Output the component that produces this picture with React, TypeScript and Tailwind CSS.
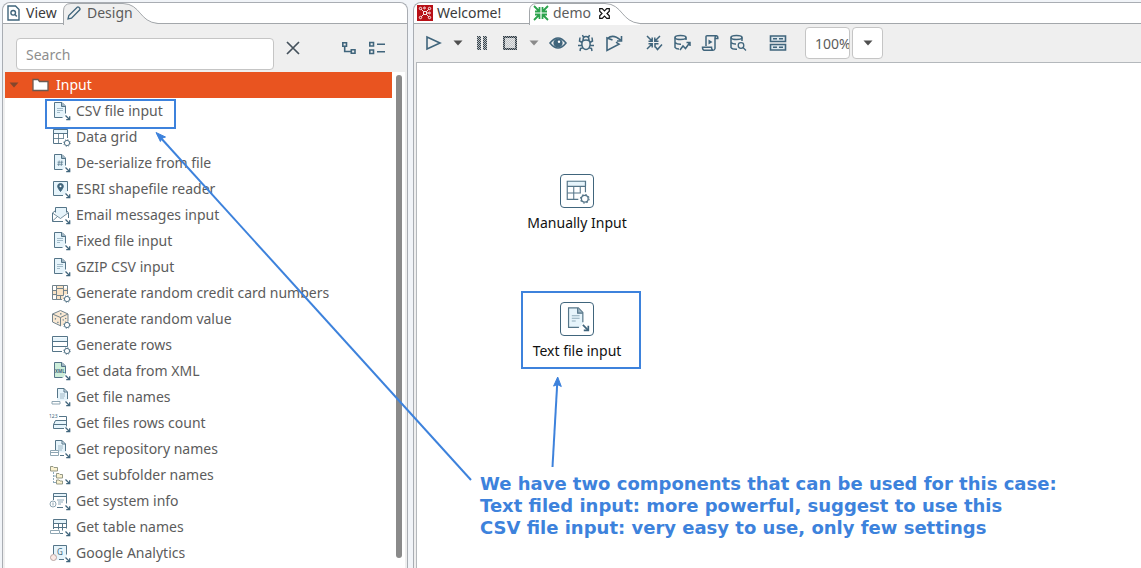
import type { ReactNode } from "react";

const INK = "#40657c";
const SOFT = "#557588";
const TINT = "#e6f4fb";

type IconProps = { size?: number; stroke?: number; children: ReactNode };

function Glyph({ size = 20, stroke = 1, children }: IconProps) {
  return (
    <svg
      width={size}
      height={size}
      viewBox="0 0 20 20"
      fill="none"
      stroke={SOFT}
      strokeWidth={stroke}
      className="shrink-0 overflow-visible"
      aria-hidden="true"
    >
      {children}
    </svg>
  );
}

function ArrowOut() {
  return (
    <g strokeWidth="1.3" stroke={INK}>
      <path d="M14.500 14.500l4 4" />
      <path d="M18.700 15.200v3.500h-3.500" />
    </g>
  );
}

function Gear() {
  return (
    <g>
      <circle cx="16" cy="16" r="2.600" fill="#fff" strokeWidth="1" />
      <circle cx="16" cy="16" r="3.300" strokeWidth="0.9" strokeDasharray="1.2 1.392" />
    </g>
  );
}

function Doc({ lines = true, fill = TINT }: { lines?: boolean; fill?: string }) {
  return (
    <g>
      <path d="M3.500 1.500h7l4 4V13l-2 3.500h-9z" fill={fill} stroke="none" />
      <path d="M11.500 16.500h-8v-15h7.500l3.500 3.500v7.500" />
      <path d="M10.500 1.500v4h4" fill="#9fb6c3" />
      {lines && <path d="M6 7.500h6M6 9.500h6M6 11.500h3" stroke="#8fabbb" strokeWidth="0.8" />}
    </g>
  );
}

function SmallDoc() {
  return (
    <g>
      <path d="M6 1.500h7l4 4v8H6z" fill={TINT} stroke="none" />
      <path d="M6.500 11V1.500H13l3.500 3.500v7M13 1.500v3.500h3.500" />
      <path d="M9 7h5M9 9h5M9 11h4" stroke="#8fabbb" strokeWidth="0.8" />
    </g>
  );
}

const csvIcon = (
  <Glyph>
    <Doc />
    <ArrowOut />
  </Glyph>
);

const gridShape = (
  <g>
    <path d="M2.500 2h15v4h-15z" fill={TINT} stroke="none" />
    <path d="M11 16.500H2.500v-14h14V11M2.500 6.500h14" />
    <path d="M2.500 11.500H13M7.500 6.500v10M12.500 6.500v5" strokeWidth="0.8" />
    <Gear />
  </g>
);

const items: { label: string; icon: ReactNode; marked?: boolean }[] = [
  { label: "CSV file input", icon: csvIcon, marked: true },
  { label: "Data grid", icon: <Glyph>{gridShape}</Glyph> },
  {
    label: "De-serialize from file",
    icon: (
      <Glyph>
        <Doc lines={false} />
        <path d="M8.200 7.500l-.6 5.500M10.800 7.500l-.6 5.500M6.500 9.200h5.700M6.200 11.300h5.700" strokeWidth="0.7" />
        <ArrowOut />
      </Glyph>
    ),
  },
  {
    label: "ESRI shapefile reader",
    icon: (
      <Glyph>
        <path d="M2.500 2.500h14v10l-4 4h-10z" fill={TINT} stroke="none" />
        <path d="M12 16.500H2.500v-14h14V12" />
        <path
          d="M9.500 12.500C8 10.200 6.700 9 6.700 7.300a2.800 2.800 0 015.600 0c0 1.700-1.300 2.900-2.800 5.200z"
          fill={INK}
          stroke={INK}
        />
        <circle cx="9.500" cy="7.300" r="1" fill="#fff" stroke="none" />
        <ArrowOut />
      </Glyph>
    ),
  },
  {
    label: "Email messages input",
    icon: (
      <Glyph>
        <path d="M4.500 2.500h11v6l-6 5-5-4.500z" fill={TINT} stroke="none" />
        <path d="M4.500 7.500v-5h11v5M4.500 5.500l-3 2.500v8.500H12M15.500 5.500l2 2.500v5" />
        <path d="M1.500 8l8 5.500 7.500-5.500M1.500 16l5-4.500" strokeWidth="0.8" />
        <ArrowOut />
      </Glyph>
    ),
  },
  { label: "Fixed file input", icon: csvIcon },
  { label: "GZIP CSV input", icon: csvIcon },
  {
    label: "Generate random credit card numbers",
    icon: (
      <Glyph>
        <path d="M5.500 2.500h7v3h4v6h-4v5h-7v-4h-4v-5h4z" fill="#f9e2c4" stroke="none" />
        <path
          d="M11 16.500H1.500v-14h15V11M5.500 5.500h7v7h-7zM5.500 5.500v-3M12.500 5.500v-3M1.500 7.500h4M12.500 7.500h4M1.500 11.500h4M5.500 12.500v4M9.500 12.500v4"
          stroke="#73838b"
        />
        <Gear />
      </Glyph>
    ),
  },
  {
    label: "Generate random value",
    icon: (
      <Glyph>
        <path d="M2 5l7.500-3L17 5v7l-6 5-9-4z" fill="#f9e8d2" stroke="none" />
        <path d="M10 17l-8.500-4V5l8-3.500L17 5v7M1.500 5l8 3.500L17 5M9.500 8.500V17" stroke="#73838b" />
        <path d="M9 4.800h1.500M4 9.500l.8.800M6.500 13l.8.800M12.500 10.500l-.6.900M15 9l-.6.900" strokeWidth="1.300" />
        <Gear />
      </Glyph>
    ),
  },
  {
    label: "Generate rows",
    icon: (
      <Glyph>
        <path d="M1.500 2.500h15v4h-15z" fill={TINT} stroke="none" />
        <path d="M11 16.500H1.500v-15h15v10h-15M1.500 6.500h15" />
        <Gear />
      </Glyph>
    ),
  },
  {
    label: "Get data from XML",
    icon: (
      <Glyph>
        <Doc lines={false} fill="#cdeeda" />
        <text x="9" y="11.500" fontSize="4.500" fontWeight="700" textAnchor="middle" fill={INK} stroke="none" fontFamily="Noto Sans, sans-serif">
          XML
        </text>
        <ArrowOut />
      </Glyph>
    ),
  },
  {
    label: "Get file names",
    icon: (
      <Glyph>
        <SmallDoc />
        <path d="M1 14.500h8v2.500H1z" fill="#fff" stroke="#8fa6b3" />
        <ArrowOut />
      </Glyph>
    ),
  },
  {
    label: "Get files rows count",
    icon: (
      <Glyph>
        <text x="-2" y="5" fontSize="5" fill={INK} stroke="none" fontFamily="Noto Sans, sans-serif">
          123
        </text>
        <path d="M3 8h12v7H3z" fill={TINT} stroke="none" />
        <path d="M8 3.500h7.500v10M4.500 7.500h11M2.500 11.500h13M4.500 7.500l-2 4v4H13" />
        <ArrowOut />
      </Glyph>
    ),
  },
  {
    label: "Get repository names",
    icon: (
      <Glyph>
        <g transform="translate(-2 0)">
          <SmallDoc />
        </g>
        <path d="M-.5 11.500h8v5h-8zM-.5 13.500h8" fill="#fff" stroke="#8fa6b3" />
        <path d="M9 16.500h4" />
        <ArrowOut />
      </Glyph>
    ),
  },
  {
    label: "Get subfolder names",
    icon: (
      <Glyph>
        <path
          d="M-.5 1.500H2l1 1h3.500V6h-7zM5.500 8.500H8l1 1h2.500V13h-6zM5.500 15H8l1 1h2.500v3h-6z"
          fill="#fbf2d0"
          stroke="#8a8e7c"
          strokeWidth="0.9"
        />
        <path d="M2.500 7v11M3 11h2.500M3 17.500h2.500" stroke="#8fabbb" strokeDasharray="2 1" />
        <ArrowOut />
      </Glyph>
    ),
  },
  {
    label: "Get system info",
    icon: (
      <Glyph>
        <path d="M2 2.500h14v3H2z" fill={TINT} stroke="none" />
        <path d="M2.500 9V2.500h13v10M2.500 5.500h13M6 16.500h6" />
        <path d="M6 9h7M7 11h5M7 13h3" stroke="#8fabbb" />
        <circle cx="2" cy="13" r="3" fill="#fff" stroke="#8fa6b3" />
        <path d="M2 11.500v3" stroke="#8fa6b3" />
        <ArrowOut />
      </Glyph>
    ),
  },
  {
    label: "Get table names",
    icon: (
      <Glyph>
        <path d="M2 2h14v4H2z" fill={TINT} stroke="none" />
        <path d="M2.500 12V2.500h13v9M2.500 6.500h13M2.500 10.500h13M7.500 6.500v6M11.500 6.500v7M9 16.500h3" />
        <path d="M-.5 13.500h9v3h-9z" fill="#fff" stroke="#8fa6b3" />
        <ArrowOut />
      </Glyph>
    ),
  },
  {
    label: "Google Analytics",
    icon: (
      <Glyph>
        <path d="M2 2h14v11l-4 4H2z" fill={TINT} stroke="none" />
        <path d="M2.500 11V2.500h13v9M8 16.500h5" />
        <text x="9" y="12" fontSize="8" textAnchor="middle" fill={INK} stroke="none" fontFamily="Noto Sans, sans-serif">
          G
        </text>
        <circle cx="2.500" cy="14.500" r="3" fill="#fbe9e4" stroke="#b8a5a3" />
        <ArrowOut />
      </Glyph>
    ),
  },
];

function ToolButton({ label, children, wide = true }: { label: string; children: ReactNode; wide?: boolean }) {
  return (
    <button type="button" aria-label={label} className={`flex h-7 items-center justify-center ${wide ? "w-7" : "w-5"}`}>
      {children}
    </button>
  );
}

function ToolIcon({ children }: { children: ReactNode }) {
  return (
    <svg width="18" height="18" viewBox="0 0 18 18" fill="none" stroke={INK} strokeWidth="1.6" aria-hidden="true">
      {children}
    </svg>
  );
}

function Checker({ id, dark, light }: { id: string; dark: string; light: string }) {
  return (
    <defs>
      <pattern id={id} width="2" height="2" patternUnits="userSpaceOnUse">
        <path d="M0 0h2v2H0z" fill={light} stroke="none" />
        <path d="M0 0h1v1H0zM1 1h1v1H1z" fill={dark} stroke="none" />
      </pattern>
    </defs>
  );
}

function Caret({ color }: { color: string }) {
  return (
    <svg width="10" height="6" viewBox="0 0 10 6" aria-hidden="true">
      <path d="M.5.500h9L5 5.500z" fill={color} />
    </svg>
  );
}

function TabShape({ fill, width, path }: { fill: string; width: number; path: string }) {
  return (
    <svg width={width} height="22" viewBox={`0 0 ${width} 22`} className="absolute top-0 left-0" aria-hidden="true">
      <path d={`${path}V22H0z`} fill={fill} />
      <path d={path} fill="none" stroke="#a3a7ab" />
    </svg>
  );
}

function DesignPanel() {
  return (
    <aside className="flex w-[406px] shrink-0 flex-col rounded-t-lg border-x border-t border-[#a9adb3] bg-[#efefef]">
      <div role="tablist" className="flex h-[21px] shrink-0 rounded-t-lg border-b border-[#a3a7ab] bg-white">
        <button type="button" role="tab" aria-selected="false" className="flex w-[60px] items-center gap-1.5 pl-1 text-[#3b3b3b]">
          <svg width="13" height="16" viewBox="0 0 13 16" fill="none" stroke={INK} strokeWidth="1.400" aria-hidden="true">
            <path d="M1 1h7.500L12 4.500V15H1z" />
            <circle cx="6.200" cy="7.800" r="2.300" />
            <path d="M8 9.500l1.800 2" />
          </svg>
          View
        </button>
        <button type="button" role="tab" aria-selected="true" className="relative flex w-24 items-center text-[#5c5c5c]">
          <TabShape fill="#efefef" width={96} path="M.5 22V8Q.5.500 8 .500H60C78 1 76 19 95 20.500" />
          <span className="relative flex items-center gap-1.5 pl-1">
            <svg width="14" height="14" viewBox="0 0 14 14" fill="none" stroke={INK} strokeWidth="1.300" aria-hidden="true">
              <path d="M1 13l.8-3.500L10.200 1.200q.8-.6 1.600.1l.9.900q.7.800.1 1.600L4.500 12.200z" />
            </svg>
            Design
          </span>
        </button>
      </div>

      <div className="flex shrink-0 items-start pt-3.5 pr-4 pb-0.5 pl-[13px]">
        <input
          type="text"
          aria-label="Search"
          placeholder="Search"
          className="h-8 min-w-0 flex-1 rounded border border-[#c5c5c5] bg-white px-[9px] outline-none placeholder:text-[#8e8e8e]"
        />
        <button type="button" aria-label="Clear search" className="ml-[5px] flex h-5 w-7 items-center justify-center">
          <svg width="14" height="14" viewBox="0 0 14 14" stroke="#45525c" strokeWidth="1.700" aria-hidden="true">
            <path d="M1 1l12 12M13 1L1 13" />
          </svg>
        </button>
        <button type="button" aria-label="Expand all" className="ml-7 flex h-5 w-7 items-center justify-center">
          <svg width="14" height="14" viewBox="0 0 14 14" fill="none" stroke={INK} strokeWidth="1.600" aria-hidden="true">
            <path d="M.8 1.800h3.700v3.400H.800zM9.300 8.800H13v3.400H9.300zM2.700 5v5.500h6.500" />
          </svg>
        </button>
        <button type="button" aria-label="Collapse all" className="flex h-5 w-7 items-center justify-center">
          <svg width="18" height="14" viewBox="0 0 18 14" fill="none" stroke={INK} strokeWidth="1.600" aria-hidden="true">
            <path d="M1.800 1.500h3.700V5H1.800zM1.800 9h3.700v3.500H1.800zM9 3.300h8M9 10.700h8" />
          </svg>
        </button>
      </div>

      <div className="mx-0.5 flex min-h-0 flex-1 bg-white">
        <div className="min-w-0 flex-1 overflow-hidden">
          <button type="button" aria-expanded="true" className="flex h-[26px] w-full items-center bg-[#e95420] pl-1 text-white">
            <Caret color="#84462c" />
            <svg width="17" height="14" viewBox="0 0 17 14" className="mr-[7px] ml-[13px]" aria-hidden="true">
              <path d="M1 12.500v-11h5l1.500 2H16v9z" fill="#fff" stroke="#6b5a52" strokeWidth="1.300" />
            </svg>
            Input
          </button>
          <ul>
            {items.map((item) => (
              <li key={item.label} className="relative flex h-[26px] items-center gap-[5px] pl-[46px] whitespace-nowrap text-[#5c5c5c]">
                {item.icon}
                {item.label}
                {item.marked && <span className="absolute top-px left-10 h-[30px] w-[131px] border-2 border-[#3d82dc]" />}
              </li>
            ))}
          </ul>
        </div>
        <div className="w-[13px] shrink-0 px-1 pt-[3px] pb-2.5">
          <div className="h-full w-1.5 rounded-full bg-[#8a8a8a]" />
        </div>
      </div>
    </aside>
  );
}

function Toolbar() {
  return (
    <div role="toolbar" className="flex h-[38px] shrink-0 items-center bg-[#efefef] pl-1.5">
      <ToolButton label="Run">
        <ToolIcon>
          <path d="M2 3v12l13-6z" />
        </ToolIcon>
      </ToolButton>
      <ToolButton label="Run options" wide={false}>
        <Caret color="#4f4f4f" />
      </ToolButton>
      <ToolButton label="Pause">
        <ToolIcon>
          <Checker id="pause-checker" dark="#38434b" light="#b9bfc3" />
          <path d="M4 2h4v14H4zM10 2h4v14h-4z" fill="url(#pause-checker)" stroke="none" />
        </ToolIcon>
      </ToolButton>
      <ToolButton label="Stop">
        <ToolIcon>
          <Checker id="stop-edge" dark="#2f3941" light="#9aa2a7" />
          <Checker id="stop-fill" dark="#bfc3c6" light="#e6e7e8" />
          <path d="M2 2h14v14H2z" fill="url(#stop-edge)" stroke="none" />
          <path d="M4 4h10v10H4z" fill="url(#stop-fill)" stroke="none" />
        </ToolIcon>
      </ToolButton>
      <ToolButton label="Stop options" wide={false}>
        <Caret color="#8a8a8a" />
      </ToolButton>
      <ToolButton label="Preview">
        <ToolIcon>
          <path d="M1 9q8-10 16 0-8 10-16 0z" />
          <circle cx="9" cy="9" r="3.800" fill={INK} />
          <circle cx="10" cy="7.800" r="1.200" fill="#fff" stroke="none" />
        </ToolIcon>
      </ToolButton>
      <ToolButton label="Debug">
        <ToolIcon>
          <path d="M5.500 7q3.500-2 7 0 1.500 4-.5 7-3 3-6 0-2-3-.5-7zM6 6q0-3.500 3-3.500T12 6M5.200 8.500L2.500 7 3 3.500M12.800 8.500L15.500 7 15 3.500M5 11.500H1M13 11.500h4M6 13.500L3.500 14.500 3 17M12 13.500l2.500 1L15 17M6.500 3.500L5.500 1M11.500 3.500L12.500 1" strokeWidth="1.500" />
        </ToolIcon>
      </ToolButton>
      <ToolButton label="Replay">
        <ToolIcon>
          <path d="M7.500 6L2 4v12.500l12-6.300-3-2M2.500 4.500Q8-.5 15.500 6M16.500 2v5H12" />
        </ToolIcon>
      </ToolButton>
      <div className="ml-3 flex">
        <ToolButton label="Verify">
          <ToolIcon>
            <path d="M2 2l5 5M3.500 7.200h3.700V3.500M15 2l-5 5M13.500 7.200H9.800V3.500M2 15l5-5M3.500 9.800h3.700v3.700M10 13.500V9.800h3.500M10.500 13l2 2.500 4.500-5" strokeWidth="1.500" />
          </ToolIcon>
        </ToolButton>
        <ToolButton label="Impact analysis">
          <ToolIcon>
            <ellipse cx="7.500" cy="3.500" rx="5.500" ry="2" />
            <path d="M2 3.500v9.800q1 1.700 4 1.700M2 8.500q2 2 6 1.800M13 3.500V6M7 16l3-4 2.500 2.500L16.500 9M13.500 8.500H17V12" strokeWidth="1.500" />
          </ToolIcon>
        </ToolButton>
        <ToolButton label="SQL">
          <ToolIcon>
            <path d="M5 12V2.500q0-.8 1-.8h9.500q1.500.3 1.300 2.800H14v10q-.3 1.800-2 1.800H3q-1.500-.3-1.500-3h9q0 2.500 1.500 3M14 4.500q0-2 1-2.800" strokeWidth="1.500" />
            <path d="M7.500 5.500v5l4-2.500z" fill={INK} stroke="none" />
          </ToolIcon>
        </ToolButton>
        <ToolButton label="Explore database">
          <ToolIcon>
            <ellipse cx="7.500" cy="3.500" rx="5.500" ry="2" />
            <path d="M2 3.500v10q1 2 6 1.800M2 8.500q2 1.800 5 1.500M13 3.500V7" strokeWidth="1.500" />
            <circle cx="12" cy="11.500" r="2.800" strokeWidth="1.300" />
            <path d="M14 13.500l3 3" strokeWidth="1.300" />
          </ToolIcon>
        </ToolButton>
      </div>
      <div className="ml-3">
        <ToolButton label="Show results">
          <ToolIcon>
            <path d="M1.500 2h15v5.500h-15zM1.500 10.500h15V16h-15z" fill="#dbe6ec" />
            <path d="M4 4.800h4M10 4.800h4M4 13.200h4M10 13.200h4" />
          </ToolIcon>
        </ToolButton>
      </div>
      <input
        type="text"
        aria-label="Zoom"
        defaultValue="100%"
        className="ml-[13px] h-8 w-[45px] rounded border border-[#c5c5c5] bg-white pl-[9px] text-[#5c5c5c] outline-none"
      />
      <button
        type="button"
        aria-label="Zoom levels"
        className="ml-0.5 flex h-8 w-[31px] items-center justify-center rounded border border-[#c5c5c5] bg-white"
      >
        <Caret color="#4f4f4f" />
      </button>
    </div>
  );
}

function Step({ label, children }: { label: string; children: ReactNode }) {
  return (
    <div className="flex flex-col items-center gap-1 whitespace-nowrap">
      <div className="flex size-[34px] items-center justify-center rounded border border-[#40657c] bg-white">{children}</div>
      <span className="leading-[22px] text-[#111111]">{label}</span>
    </div>
  );
}

function Editor() {
  return (
    <main className="flex min-w-0 flex-1 flex-col rounded-tl-lg border-t border-l border-[#a9adb3] bg-[#efefef]">
      <div role="tablist" className="flex h-[21px] shrink-0 rounded-tl-lg border-b border-[#a3a7ab] bg-white">
        <button type="button" role="tab" aria-selected="false" className="flex w-[115px] items-center gap-1 pl-[3px] text-[#3b3b3b]">
          <svg width="16" height="16" viewBox="0 0 16 16" fill="none" stroke="#fff" strokeWidth="0.9" aria-hidden="true">
            <path d="M0 0h16v16H0z" fill="#b80f16" stroke="none" />
            <path d="M4.300 4.300l2.200 2.200M11.700 4.300L9.500 6.500M4.300 11.700l2.200-2.200M11.700 11.700L9.500 9.500M6.500 6.500h3v3h-3zM9.500 8h2" />
            <circle cx="3.500" cy="3.500" r="1.200" />
            <circle cx="7.500" cy="3" r="0.9" />
            <circle cx="12.500" cy="3.500" r="1.200" />
            <circle cx="3.500" cy="12.500" r="1.200" />
            <circle cx="12.500" cy="12.500" r="1.200" />
            <circle cx="12.500" cy="8" r="0.9" />
          </svg>
          Welcome!
        </button>
        <div className="relative flex w-[112px] items-center text-[#5c5c5c]">
          <TabShape fill="#ffffff" width={112} path="M.5 22V8Q.5.500 8 .500H76C94 1 92 19 111 20.500" />
          <button type="button" role="tab" aria-selected="true" className="relative flex items-center gap-1 pl-1">
            <svg width="16" height="16" viewBox="0 0 16 16" fill="none" stroke="#2ba34c" strokeWidth="1.800" aria-hidden="true">
              <path d="M1 1l5.500 5.500M2 6.500h4.500V2M15 1L9.500 6.500M14 6.500H9.500V2M1 15l5.500-5.500M2 9.500h4.500V14M15 15L9.500 9.500M14 9.500H9.500V14" />
            </svg>
            demo
          </button>
          <button type="button" aria-label="Close demo" className="relative ml-2">
            <svg width="11" height="11" viewBox="0 0 11 11" fill="#fff" stroke="#111" strokeWidth="1.200" aria-hidden="true">
              <path d="M.7.700h2.500l2.300 2.300L7.800.700h2.500v2.500L8 5.500l2.300 2.300v2.500H7.800L5.500 8l-2.300 2.300H.700V7.800L3 5.500.700 3.200z" />
            </svg>
          </button>
        </div>
      </div>
      <Toolbar />
      <div className="relative ml-[2px] min-h-0 flex-1 border-t border-l border-[#b4b8bc] bg-white">
        <div className="absolute top-[111px] left-[100px] flex w-[120px] justify-center">
          <Step label="Manually Input">
            <Glyph size={26} stroke={0.9}>
              {gridShape}
            </Glyph>
          </Step>
        </div>
        <div className="absolute top-[228px] left-[104px] flex h-[78px] w-[120px] justify-center border-2 border-[#3d82dc] pt-[9px] pr-2">
          <Step label="Text file input">
            <Glyph size={26} stroke={0.9}>
              <Doc />
              <ArrowOut />
            </Glyph>
          </Step>
        </div>
        <p className="absolute top-[410px] left-[63px] font-['DejaVu_Sans',sans-serif] text-lg leading-[22px] font-bold whitespace-nowrap text-[#3d82dc]">
          We have two components that can be used for this case:
          <br />
          Text filed input: more powerful, suggest to use this
          <br />
          CSV file input: very easy to use, only few settings
        </p>
      </div>
    </main>
  );
}

export default function App() {
  return (
    <div className="relative flex h-screen gap-[5px] overflow-hidden bg-[#f1f4f8] pt-0.5 pl-0.5 font-['Noto_Sans',sans-serif] text-sm">
      <DesignPanel />
      <Editor />
      <svg width="660" height="568" viewBox="0 0 660 568" className="pointer-events-none absolute top-0 left-0" aria-hidden="true">
        <g stroke="#3d82dc" strokeWidth="2" fill="#3d82dc">
          <path d="M471 480L160 137" fill="none" />
          <path d="M156 132.500l9.500 4.500-3.500 1.200-1.600 3.300z" strokeWidth="1" />
          <path d="M552.500 467L557.300 382" fill="none" />
          <path d="M557.700 377l3.600 9.500-3.900-2-3.800 1.600z" strokeWidth="1" />
        </g>
      </svg>
    </div>
  );
}
